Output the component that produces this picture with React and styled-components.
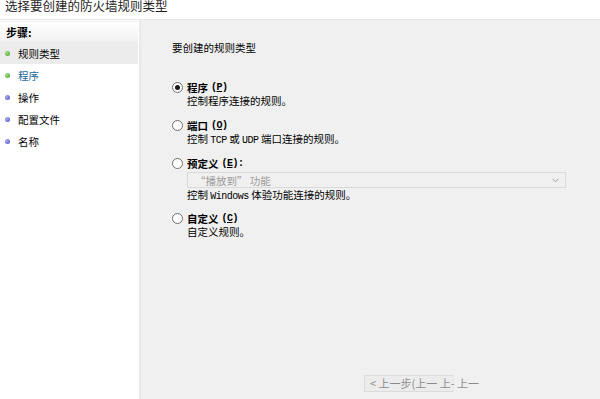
import React from "react";
import styled, { createGlobalStyle } from "styled-components";

const Global = createGlobalStyle`
  html, body { margin: 0; padding: 0; background: #ffffff; }
  body { width: 600px; height: 399px; overflow: hidden;
    font-family: "Noto Sans CJK SC", "Noto Sans", sans-serif; color: #000; }
`;

const Window = styled.div`
  width: 600px;
  height: 399px;
  display: flex;
  flex-direction: column;
  background: #ffffff;
`;

const TitleBar = styled.div`
  height: 20px;
  flex: none;
  box-sizing: border-box;
  padding-left: 5px;
  font-size: 12.5px;
  line-height: 12px;
  color: #1e1e1e;
  border-bottom: 1px solid #e6e6e6;
  overflow: hidden;
`;

const Body = styled.div`
  flex: 1;
  display: flex;
  min-height: 0;
`;

const Sidebar = styled.div`
  width: 141px;
  flex: none;
  box-sizing: border-box;
  background: #ffffff;
  border-right: 2px solid #e9e9e9;
  padding-top: 1px;
`;

const StepsHeader = styled.div`
  height: 21px;
  margin-right: 1px;
  box-sizing: border-box;
  padding-left: 6px;
  display: flex;
  align-items: center;
  font-size: 11px;
  font-weight: 700;
  background: linear-gradient(#ffffff, #f1f1f1);
  border-top: 1px solid #f0f0f0;
`;

const StepRow = styled.div`
  height: 22px;
  margin-right: 1px;
  display: flex;
  align-items: center;
  gap: 8px;
  padding-left: 5px;
  font-size: 10.5px;
  background: ${(p) => (p.$active ? "#ececec" : "transparent")};
  color: ${(p) => (p.$current ? "#1b6a9c" : "#000")};
`;

const Dot = styled.span`
  width: 5px;
  height: 5px;
  border-radius: 50%;
  background: ${(p) =>
    p.$done
      ? "radial-gradient(circle at 35% 35%, #a5e07a, #3f9e2a)"
      : "radial-gradient(circle at 35% 35%, #a9acf0, #4a4fbf)"};
`;

const Main = styled.div`
  flex: 1;
  background: #f0f0f0;
  display: flex;
  flex-direction: column;
  padding: 21px 34px 0 31px;
  box-sizing: border-box;
  font-size: 10.5px;
`;

const Heading = styled.div`
  line-height: 13px;
  margin-bottom: 27px;
`;

const Option = styled.div`
  display: flex;
  flex-direction: column;
  margin-bottom: ${(p) => p.$mb || 10}px;
`;

const OptionTitle = styled.div`
  display: flex;
  align-items: center;
  gap: 3px;
  line-height: 13px;
  font-weight: 700;
`;

const Radio = styled.span`
  width: 11px;
  height: 11px;
  box-sizing: border-box;
  border-radius: 50%;
  border: 1px solid #6f6f6f;
  background: #ffffff;
  display: inline-flex;
  align-items: center;
  justify-content: center;
  margin-right: 1px;
  &::after {
    content: "";
    width: 5px;
    height: 5px;
    border-radius: 50%;
    background: ${(p) => (p.$checked ? "#1a1a1a" : "transparent")};
  }
`;

const Latin = styled.span`
  font-family: "Liberation Mono", "DejaVu Sans Mono", monospace;
  font-size: 10px;
  letter-spacing: -0.5px;
  font-weight: ${(p) => (p.$bold ? 700 : 400)};
`;

const Key = styled.span`
  text-decoration: underline;
`;

const Desc = styled.div`
  padding-left: 15px;
  line-height: 14px;
  white-space: nowrap;
`;

const Select = styled.div`
  margin: 2px 0 0 15px;
  height: 16px;
  box-sizing: border-box;
  border: 1px solid #dadada;
  background: #f0f0f0;
  display: flex;
  align-items: center;
  justify-content: space-between;
  padding: 0 6px 0 7px;
  color: #9a9a9a;
  font-weight: 400;
`;

const Chevron = styled.svg`
  width: 7px;
  height: 5px;
`;

const Footer = styled.div`
  margin-top: auto;
  height: 24px;
  padding-left: 192px;
  display: flex;
  align-items: flex-start;
`;

const NavButton = styled.div`
  width: 90px;
  height: 17px;
  box-sizing: border-box;
  border: 1px solid #dcdcdc;
  border-right-color: #e8e8e8;
  background: #ececec;
  color: #8c8c8c;
  font-size: 11px;
  line-height: 15px;
  padding-left: 5px;
  white-space: nowrap;
  overflow: visible;
`;

const steps = [
  { label: "规则类型", done: true, active: true },
  { label: "程序", done: true, current: true },
  { label: "操作" },
  { label: "配置文件" },
  { label: "名称" },
];

export default function App() {
  return (
    <>
      <Global />
      <Window>
        <TitleBar>选择要创建的防火墙规则类型</TitleBar>
        <Body>
          <Sidebar>
            <StepsHeader>步骤:</StepsHeader>
            {steps.map((s) => (
              <StepRow key={s.label} $active={s.active} $current={s.current}>
                <Dot $done={s.done} />
                {s.label}
              </StepRow>
            ))}
          </Sidebar>
          <Main>
            <Heading>要创建的规则类型</Heading>
            <Option $mb={11}>
              <OptionTitle>
                <Radio $checked />
                程序<Latin $bold>(<Key>P</Key>)</Latin>
              </OptionTitle>
              <Desc>控制程序连接的规则。</Desc>
            </Option>
            <Option $mb={9}>
              <OptionTitle>
                <Radio />
                端口<Latin $bold>(<Key>O</Key>)</Latin>
              </OptionTitle>
              <Desc>
                控制 <Latin>TCP</Latin> 或 <Latin>UDP</Latin> 端口连接的规则。
              </Desc>
            </Option>
            <Option $mb={8}>
              <OptionTitle>
                <Radio />
                预定义<Latin $bold>(<Key>E</Key>):</Latin>
              </OptionTitle>
              <Select>
                <span>“播放到” 功能</span>
                <Chevron viewBox="0 0 7 5">
                  <path d="M0.5 0.8 L3.5 3.8 L6.5 0.8" fill="none" stroke="#a0a0a0" strokeWidth="1" />
                </Chevron>
              </Select>
              <Desc>
                控制 <Latin>Windows</Latin> 体验功能连接的规则。
              </Desc>
            </Option>
            <Option>
              <OptionTitle>
                <Radio />
                自定义<Latin $bold>(<Key>C</Key>)</Latin>
              </OptionTitle>
              <Desc>自定义规则。</Desc>
            </Option>
            <Footer>
              <NavButton>&lt; 上一步(上一 上- 上一</NavButton>
            </Footer>
          </Main>
        </Body>
      </Window>
    </>
  );
}
